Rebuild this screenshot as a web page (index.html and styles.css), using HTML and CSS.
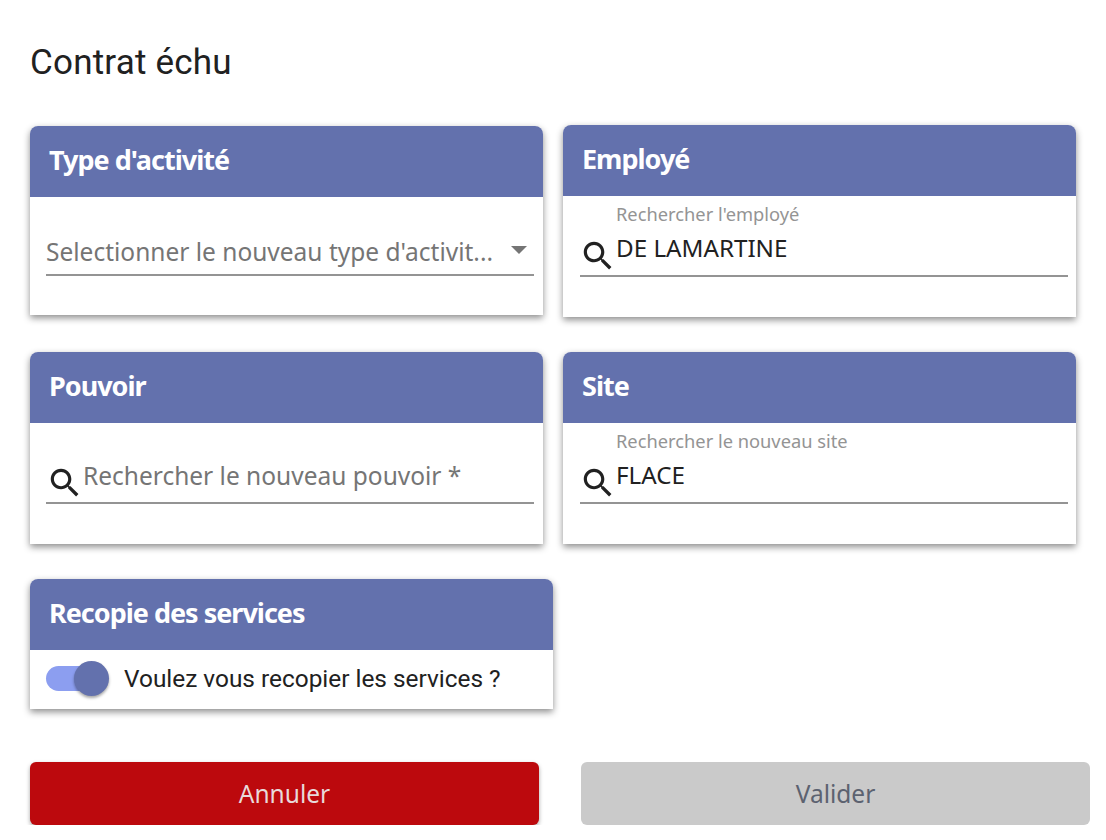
FILE: index.html
```html
<!DOCTYPE html>
<html lang="fr">
<head>
    <meta charset="UTF-8">
    <meta name="viewport" content="width=device-width, initial-scale=1.0">
    <title>Contrat échu</title>
    <link rel="stylesheet" href="styles.css">
</head>
<body>
    <h1 class="page-title">Contrat échu</h1>

    <div class="card-grid">
        <section class="card card-activity">
            <h2 class="card-header">Type d'activité</h2>
            <div class="card-body">
                <div class="field field-select">
                    <span class="placeholder select-text">Selectionner le nouveau type d'activit...</span>
                    <span class="select-arrow"></span>
                </div>
            </div>
        </section>

        <section class="card card-employee">
            <h2 class="card-header">Employé</h2>
            <div class="card-body">
                <div class="field field-filled">
                    <svg class="search-icon" viewBox="0 0 24 24"><path d="M15.5 14h-.79l-.28-.27C15.41 12.59 16 11.11 16 9.5 16 5.91 13.09 3 9.5 3S3 5.91 3 9.5 5.91 16 9.5 16c1.61 0 3.09-.59 4.23-1.57l.27.28v.79l5 4.99L20.49 19l-4.99-5zm-6 0C7.01 14 5 11.99 5 9.5S7.01 5 9.5 5 14 7.01 14 9.5 11.99 14 9.5 14z"/></svg>
                    <div class="field-content">
                        <label class="field-label">Rechercher l'employé</label>
                        <span class="field-value">DE LAMARTINE</span>
                    </div>
                </div>
            </div>
        </section>

        <section class="card">
            <h2 class="card-header">Pouvoir</h2>
            <div class="card-body">
                <div class="field field-empty">
                    <svg class="search-icon" viewBox="0 0 24 24"><path d="M15.5 14h-.79l-.28-.27C15.41 12.59 16 11.11 16 9.5 16 5.91 13.09 3 9.5 3S3 5.91 3 9.5 5.91 16 9.5 16c1.61 0 3.09-.59 4.23-1.57l.27.28v.79l5 4.99L20.49 19l-4.99-5zm-6 0C7.01 14 5 11.99 5 9.5S7.01 5 9.5 5 14 7.01 14 9.5 11.99 14 9.5 14z"/></svg>
                    <span class="placeholder">Rechercher le nouveau pouvoir *</span>
                </div>
            </div>
        </section>

        <section class="card">
            <h2 class="card-header">Site</h2>
            <div class="card-body">
                <div class="field field-filled">
                    <svg class="search-icon" viewBox="0 0 24 24"><path d="M15.5 14h-.79l-.28-.27C15.41 12.59 16 11.11 16 9.5 16 5.91 13.09 3 9.5 3S3 5.91 3 9.5 5.91 16 9.5 16c1.61 0 3.09-.59 4.23-1.57l.27.28v.79l5 4.99L20.49 19l-4.99-5zm-6 0C7.01 14 5 11.99 5 9.5S7.01 5 9.5 5 14 7.01 14 9.5 11.99 14 9.5 14z"/></svg>
                    <div class="field-content">
                        <label class="field-label">Rechercher le nouveau site</label>
                        <span class="field-value">FLACE</span>
                    </div>
                </div>
            </div>
        </section>
    </div>

    <section class="card card-copy">
        <h2 class="card-header">Recopie des services</h2>
        <div class="copy-row">
            <span class="switch"><span class="switch-thumb"></span></span>
            <span class="copy-label">Voulez vous recopier les services ?</span>
        </div>
    </section>

    <div class="actions">
        <button class="btn btn-cancel">Annuler</button>
        <button class="btn btn-validate" disabled>Valider</button>
    </div>
</body>
</html>
```

FILE: styles.css
```css
body {
    margin: 0;
    padding: 0 16px 0 30px;
    background-color: white;
    color: #212121;
    font-family: Roboto, sans-serif;
}

.page-title {
    margin: 0;
    padding-top: 40px;
    height: 125px;
    box-sizing: border-box;
    font-size: 35px;
    line-height: 45px;
    font-weight: 400;
    letter-spacing: 0.2px;
}

.card-grid {
    display: grid;
    grid-template-columns: 513px 513px;
    column-gap: 20px;
    row-gap: 35px;
    align-items: start;
}

.card {
    background-color: white;
    border-radius: 8px 8px 0 0;
    box-shadow: 0 3px 7px rgba(0, 0, 0, 0.45);
}

.card-activity {
    margin-top: 1px;
    height: 189px;
}

.card-employee {
    height: 192px;
}

.card-grid .card:nth-child(n+3) {
    height: 192px;
}

.card-header {
    margin: 0;
    height: 71px;
    padding: 0 19px;
    box-sizing: border-box;
    background-color: #6371ad;
    border-radius: 8px 8px 0 0;
    color: white;
    font-family: "Noto Sans", sans-serif;
    font-size: 27px;
    font-weight: 700;
    letter-spacing: -1px;
    line-height: 68px;
}

.card-body {
    padding: 0 9px 0 16px;
}

.card-employee .card-body,
.card-grid .card:nth-child(4) .card-body {
    padding: 0 8px 0 17px;
}

.field {
    display: flex;
    border-bottom: 2px solid #949494;
    height: 81px;
    box-sizing: border-box;
}

.field-select {
    align-items: center;
    justify-content: space-between;
    height: 79px;
    padding: 31px 7px 0 0;
}

.placeholder {
    color: #757575;
    font-family: "Noto Sans", sans-serif;
    font-size: 24.5px;
    white-space: nowrap;
}

.select-arrow {
    width: 0;
    height: 0;
    margin-bottom: 3px;
    border-left: 8px solid transparent;
    border-right: 8px solid transparent;
    border-top: 8px solid #757575;
}

.search-icon {
    width: 38px;
    height: 38px;
    flex: none;
    margin: 41px 0 0 -1px;
    fill: #212121;
}

.field-empty .search-icon {
    margin-left: 0;
}

.field-empty .placeholder {
    margin: 36px 0 0 -1px;
}

.field-content {
    display: flex;
    flex-direction: column;
    margin-left: -1px;
}

.field-label {
    margin-top: 6px;
    color: #949494;
    font-family: "Noto Sans", sans-serif;
    font-size: 18.3px;
    line-height: 24px;
}

.field-value {
    margin-top: 5px;
    font-family: "Noto Sans", sans-serif;
    font-size: 24.2px;
    line-height: 34px;
}

.card-copy {
    width: 523px;
    margin-top: 35px;
}

.copy-row {
    display: flex;
    align-items: center;
    height: 59px;
    box-sizing: border-box;
    padding: 0 0 2px 16px;
}

.switch {
    width: 60px;
    height: 25px;
    background-color: #8c9ef0;
    border-radius: 13px;
    position: relative;
    margin-right: 18px;
}

.switch-thumb {
    position: absolute;
    top: -5px;
    right: -3px;
    width: 35px;
    height: 35px;
    background-color: #6371ad;
    border-radius: 50%;
    box-shadow: 0 2px 3px rgba(0, 0, 0, 0.35);
}

.copy-label {
    font-size: 24.4px;
}

.actions {
    display: flex;
    gap: 42px;
    margin-top: 53px;
}

.btn {
    width: 509px;
    height: 63px;
    border: none;
    border-radius: 6px;
    font-family: "Noto Sans", sans-serif;
    font-size: 24.5px;
}

.btn-cancel {
    background-color: #bc090d;
    color: #e8dada;
    box-shadow: 0 2px 4px rgba(0, 0, 0, 0.35);
}

.btn-validate {
    background-color: #cacaca;
    color: #5c6270;
}
```
